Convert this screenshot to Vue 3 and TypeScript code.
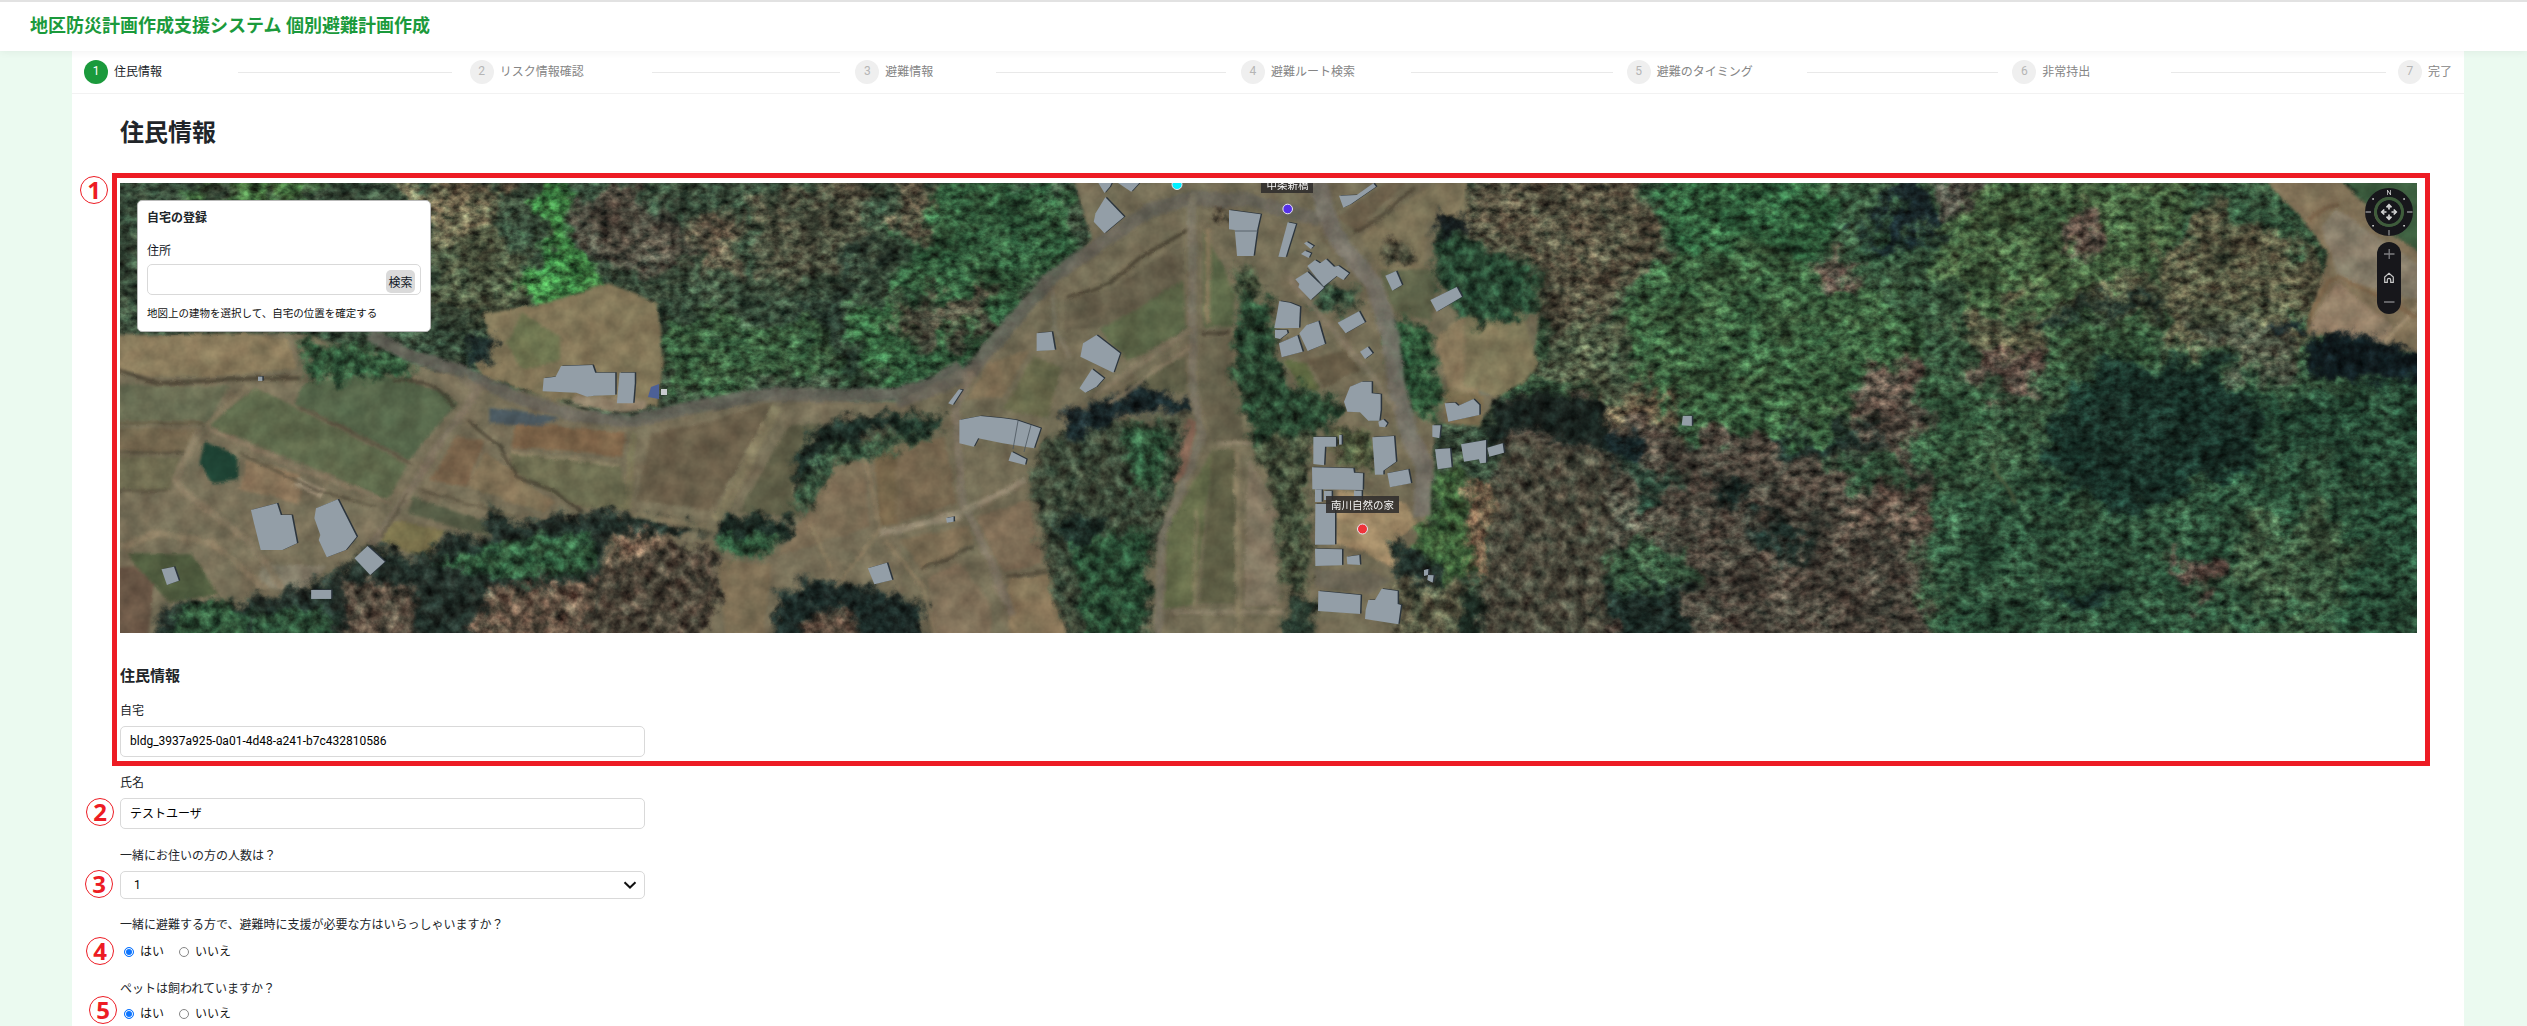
<script setup lang="ts">
import { ref } from 'vue'

interface Step { label: string; lead: number; trail: number }
interface Shape { c: string; p: string }
interface Road { c: string; w: number; p: string }
interface Tile {
  t: string
  forest: Shape[]
  fields: Shape[]
  trees: Shape[]
  roads: Road[]
  buildings: string[]
}

const steps: Step[] = [
  { label: '住民情報', lead: 76, trail: 18 },
  { label: 'リスク情報確認', lead: 68, trail: 15 },
  { label: '避難情報', lead: 63, trail: 15 },
  { label: '避難ルート検索', lead: 56, trail: 14 },
  { label: '避難のタイミング', lead: 54, trail: 14 },
  { label: '非常持出', lead: 81, trail: 12 },
  { label: '完了', lead: 0, trail: 0 },
]

const address = ref('')
const home = ref('bldg_3937a925-0a01-4d48-a241-b7c432810586')
const userName = ref('テストユーザ')
const support = ref('yes')
const pet = ref('yes')

const marks = [
  { n: 1, x: 94, y: 190 },
  { n: 2, x: 100, y: 812 },
  { n: 3, x: 99, y: 884 },
  { n: 4, x: 100, y: 951 },
  { n: 5, x: 103, y: 1010 },
]

const s = (c: string, p: string): Shape => ({ c, p })
const r = (c: string, w: number, p: string): Road => ({ c, w, p })

// Map tiles, west to east; each one has its own local coordinate grid.
const tiles: Tile[] = [
  {
    t: 'translate(110 170) scale(.5421 .3333)',
    forest: [
      s('#3f7038', '130,30 400,30 330,100 160,100'),
      s('#6e6a4c', '500,30 720,30 700,250 600,320 590,90'),
      s('#4c5a3f', '600,200 760,200 780,400 640,470 590,420'),
      s('#35853a', '770,30 850,30 840,200 900,330 920,400 860,450 780,390 760,340 810,260'),
      s('#4d4c3e', '850,60 1000,60 1100,200 1050,320 930,300 860,200'),
      s('#355e39', '1020,430 1150,460 1340,450 1360,600 1050,690 1020,600'),
      s('#5b5742', '1060,120 1170,120 1170,300 1110,320'),
      s('#4f543f', '1200,60 1420,80 1400,300 1200,350'),
      s('#2f6238', '1370,430 1568,330 1568,600 1380,650'),
      s('#263a2d', '1370,220 1420,200 1370,380 1345,600 1310,480 1240,420 1330,390'),
    ],
    fields: [
      s('#776f58', '-60,495 350,490 600,600 800,680 960,760 1230,680 1480,700 1580,640 1580,1460 -60,1460'),
      s('#827658', '690,430 800,400 920,340 1010,400 1020,580 1010,710 820,690 690,620 670,580 700,500'),
      s('#6f7550', '760,430 830,500 830,570 760,600 730,520'),
      s('#8a7b5c', '-60,500 250,490 330,510 345,600 180,620 80,620 -60,590'),
      s('#56664a', '360,640 500,610 600,660 640,700 550,870 340,700'),
      s('#5f6a4c', '270,650 340,710 550,885 510,990 400,910 180,765'),
      s('#696d53', '-60,640 220,650 180,755 -60,755'),
      s('#75684f', '-60,770 165,780 140,845 -60,845'),
      s('#6e6b50', '-60,860 130,860 110,960 -60,960'),
      s('#8a755a', '250,870 350,910 350,1000 300,980 240,960'),
      s('#1f4334', '175,815 235,860 235,930 190,940 165,880'),
      s('#7c6348', '750,755 950,790 945,860 740,830'),
      s('#6b6b4f', '740,845 940,885 960,1020 870,1015 740,900'),
      s('#6a5f4a', '1000,790 1100,760 1230,690 1110,1020 970,990'),
      s('#5f5e47', '1250,770 1310,760 1260,960 1270,1040 1160,1030'),
      s('#7a644b', '640,800 690,810 660,950 590,930'),
      s('#837357', '690,850 740,900 820,1000 800,1030 660,950'),
      s('#545a44', '560,980 700,1060 700,1100 550,1030'),
      s('#7a724c', '520,1050 620,1080 580,1170 500,1110'),
      s('#7d6e56', '1340,870 1390,880 1400,1070 1230,1160 1280,1040'),
      s('#76654a', '1410,840 1530,800 1560,860 1568,1030 1420,1070'),
      s('#4c5960', '700,710 830,745 800,765 700,760'),
      s('#7d6f55', '1120,1170 1220,1180 1200,1460 1140,1460'),
      s('#6a5746', '-60,1200 90,1180 60,1460 -60,1460'),
      s('#87806c', '280,1180 400,1190 350,1270 270,1250'),
      s('#a3957c', '345,920 400,960 390,985 340,950'),
      s('#93846c', '860,675 990,690 990,720 940,728 850,700'),
      s('#4f5b3e', '30,1150 150,1150 200,1270 110,1300'),
    ],
    trees: [
      s('#22302a', '90,1310 300,1280 420,1210 480,1120 580,1170 620,1080 700,1110 695,980 740,1060 900,1020 1010,1040 1110,1090 920,1100 880,1460 80,1460'),
      s('#2f5a3a', '120,1330 200,1290 260,1330 250,1460 100,1460'),
      s('#2f5e3c', '590,1180 700,1130 880,1080 900,1200 760,1230'),
      s('#2c5438', '270,1330 400,1300 420,1460 270,1460'),
      s('#574d3f', '430,1230 560,1250 560,1460 430,1460'),
      s('#665544', '700,1250 900,1230 860,1460 650,1460'),
      s('#4c4538', '930,1120 1110,1130 1130,1260 1070,1460 860,1460'),
      s('#7c6650', '930,1100 1020,1090 1020,1130 920,1180'),
      s('#1c2d26', '1310,760 1450,730 1530,740 1520,770 1400,790 1300,900 1260,960 1270,850'),
      s('#34523a', '1330,830 1500,770 1520,790 1410,860 1340,880 1280,1040 1255,980'),
      s('#1c2d26', '1120,1030 1260,1040 1250,1110 1180,1120 1120,1100'),
      s('#2c5638', '1130,1090 1240,1100 1220,1150 1180,1165 1120,1160'),
      s('#1b2a27', '1230,1280 1300,1220 1420,1260 1500,1300 1500,1460 1230,1460'),
      s('#305a39', '350,500 560,560 560,610 360,640'),
      s('#1c2c2a', '660,500 710,500 705,580 655,575'),
      s('#5a4d3e', '1290,1330 1370,1310 1380,1460 1270,1460'),
    ],
    roads: [
      r('#68655c', 13, '480,495 560,560 640,600 760,690 860,735 960,755 1080,710 1200,675 1440,675 1520,640 1570,590'),
      r('#7b705e', 8, '650,620 680,660 600,840 560,950 480,1130'),
      r('#857760', 4, '175,770 340,890 520,1000'),
      r('#857a60', 5, '175,770 260,640'),
      r('#877a62', 7, '165,780 120,930 150,980 260,1120 320,1260'),
      r('#8a7c62', 7, '18,1130 90,1090 190,1120 290,1260'),
      r('#7d7758', 7, '955,1010 965,790'),
      r('#857c5f', 11, '1230,710 1120,1050'),
      r('#857b60', 6, '960,1030 1120,1080'),
      r('#8a7b60', 4, '1395,870 1420,1080 1340,1250'),
      r('#8a7b60', 4, '1430,1110 1500,1250 1530,1460'),
      r('#9a8e78', 6, '1420,1090 1570,1040'),
      r('#8a7c60', 4, '1290,1050 1330,1200'),
      r('#453e30', 4, '-10,590 90,640 270,625 350,625'),
      r('#453e30', 3, '520,630 590,640 635,710'),
      r('#453e30', 3, '660,750 720,830 750,920 820,960 870,1030'),
      r('#57503e', 3, '350,710 555,880'),
      r('#5b553f', 3, '-10,760 170,760'),
      r('#534c3b', 2.5, '-10,850 140,845'),
      r('#534c3b', 2.5, '-10,965 110,960'),
      r('#534c3b', 2.5, '240,850 380,960 490,1010'),
      r('#534c3b', 2, '570,960 750,1040'),
      r('#534c3b', 2, '500,1100 550,970'),
      r('#8f8468', 3, '740,845 940,885'),
    ],
    buildings: [
      '832,588 890,585 895,608 932,608 932,675 893,677 880,680 860,668 798,664 800,625 822,620',
      '940,608 968,608 968,640 965,700 935,700',
      '260,1020 308,1000 315,1035 335,1035 345,1120 318,1140 278,1140 265,1055',
      '380,1015 420,988 455,1100 435,1140 400,1162 385,1110 388,1095 377,1045',
      '475,1128 507,1175 480,1215 451,1165',
      '371,1260 408,1260 408,1287 371,1287',
      '95,1198 118,1190 127,1232 105,1245',
      '1398,1195 1433,1178 1443,1230 1410,1243',
      '273,620 281,620 281,633 273,633',
    ],
  },
  {
    t: 'translate(900 170) scale(.4464 .3333)',
    forest: [
      s('#2d5c37', '60,0 370,0 395,200 330,340 250,430 200,520 0,660 0,200'),
      s('#59543f', '0,0 60,0 90,200 0,180'),
      s('#4a4b3a', '0,380 200,400 230,470 60,520 0,500'),
      s('#4c5040', '1280,0 1568,0 1568,650 1430,600 1440,300 1280,150'),
    ],
    fields: [
      s('#736c55', '380,0 1290,0 1200,200 1210,350 1430,430 1420,600 1340,680 1300,760 1200,760 1180,1180 1130,1460 0,1460 0,800 100,790 0,690 200,560 350,330 430,200'),
      s('#665f4b', '370,390 480,350 635,210 635,330 470,470 370,485'),
      s('#5a6446', '635,330 640,480 510,575 450,480'),
      s('#5f5e47', '500,650 640,560 640,670 560,660'),
      s('#65604b', '675,500 740,505 775,810 700,815 670,650'),
      s('#5c6848', '680,180 750,360 745,470 680,470'),
      s('#76674f', '-10,820 100,800 125,1000 -10,1060'),
      s('#67684a', '300,560 360,590 330,745 230,720'),
      s('#7c6d53', '200,580 290,540 230,680 150,690'),
      s('#7d6c55', '170,1040 290,990 320,1180 230,1210'),
      s('#7a6b52', '0,1110 150,1070 165,1120 50,1200'),
      s('#7e6f58', '60,1230 130,1175 200,1290 210,1460 80,1460'),
      s('#847357', '240,1230 345,1210 390,1460 250,1460'),
      s('#656c4a', '600,1070 700,840 660,1300 590,1320'),
      s('#5e5e45', '700,840 750,840 750,1300 670,1300'),
      s('#827762', '780,860 840,1000 850,1310 770,1310'),
      s('#6b5f4a', '980,140 1130,0 1160,0 1020,185'),
      s('#7b7257', '1030,200 1180,50 1270,0 1270,150 1180,150 1180,300 1080,300'),
      s('#5f644a', '1070,300 1200,300 1190,450 1110,430'),
      s('#8c7b5d', '1200,500 1260,440 1300,680 1230,690'),
      s('#7c7355', '1310,400 1390,430 1430,580 1340,680 1320,600'),
      s('#6f7565', '1270,470 1310,470 1325,680 1300,670'),
      s('#a08a67', '980,960 1130,1000 1160,1060 1110,1110 1110,1200 1040,1150 975,1120'),
      s('#6b6555', '930,1200 1060,1210 1100,1230 1060,1270 930,1250'),
      s('#665b46', '910,570 1000,540 1030,600 950,650'),
      s('#5c6640', '860,570 910,580 940,660 900,660'),
      s('#846554', '640,740 665,760 650,900 600,960 620,850'),
      s('#7c6e50', '1220,650 1310,680 1300,770 1220,760'),
    ],
    trees: [
      s('#3c4a38', '380,770 640,740 610,1000 560,1200 570,1460 390,1460 330,1200 290,950 320,820'),
      s('#2c5437', '500,760 600,780 590,980 520,960'),
      s('#18272a', '360,740 540,650 640,690 640,730 500,730 380,830'),
      s('#264b31', '380,1100 560,1080 540,1460 420,1460'),
      s('#1c2f28', '350,1040 470,1040 420,1140 360,1110'),
      s('#27472f', '760,370 830,390 840,540 880,640 990,700 960,780 790,820 745,600'),
      s('#424e38', '790,820 920,780 920,1250 860,1280 830,950'),
      s('#4a5538', '960,780 1060,780 1060,900 980,880'),
      s('#2a5434', '1070,430 1180,470 1220,680 1190,760 1130,700'),
      s('#264a32', '1200,180 1430,290 1430,420 1290,480 1200,340'),
      s('#161f20', '1205,140 1250,130 1290,190 1250,190 1200,210'),
      s('#3b6035', '1200,900 1260,900 1280,1200 1180,1290 1130,1150 1190,1040'),
      s('#4b4a3c', '1350,800 1580,850 1580,1460 1260,1460 1330,1150'),
      s('#18231f', '1330,700 1440,660 1580,700 1580,850 1400,770 1310,860'),
      s('#20302a', '1110,1090 1200,1180 1240,1290 1180,1300 1110,1220'),
      s('#555640', '1100,1240 1260,1240 1250,1460 1120,1460'),
      s('#84694e', '1270,930 1335,940 1310,1240 1280,1220'),
      s('#26382c', '870,1280 930,1280 920,1460 850,1460'),
      s('#18271f', '1260,1270 1310,1290 1290,1460 1250,1460'),
      s('#1d3226', '-10,735 100,740 100,780 -10,800'),
      s('#1b2a27', '-10,1270 50,1330 60,1460 -10,1460'),
      s('#34503a', '930,340 1040,360 1000,430 930,410'),
      s('#405038', '750,290 800,290 800,370 760,380'),
      s('#5a4f3c', '680,110 735,90 735,160 700,150'),
      s('#4b4a38', '1080,220 1140,220 1150,280 1080,280'),
    ],
    roads: [
      r('#67645a', 14, '-10,695 90,650 160,600 250,460 340,320 560,120 650,85 780,90 940,150'),
      r('#77736a', 18, '925,0 970,190 1060,340 1100,500 1110,640 1140,790 1172,880 1170,1040'),
      r('#787263', 8, '655,70 655,640 675,800 630,960 585,1100 578,1460'),
      r('#7c7262', 8, '160,600 125,720 140,1000 200,1160 250,1340'),
      r('#827763', 6, '870,320 950,450 1060,620 1110,720'),
      r('#857962', 5, '650,480 430,680'),
      r('#857962', 4, '650,530 470,700'),
      r('#958a74', 6, '-10,1085 150,1020 280,930'),
      r('#8b806a', 5, '600,1325 860,1325'),
      r('#8b806a', 4, '710,820 790,820'),
      r('#857b60', 5, '755,850 760,1460'),
      r('#857b60', 3, '665,1020 660,1310'),
      r('#85755a', 6, '690,180 690,460'),
      r('#3d3629', 3, '375,385 470,340 540,260 645,180'),
      r('#463e30', 3, '1015,185 1080,140 1150,50'),
      r('#463e30', 4, '675,490 740,490'),
      r('#463e30', 3, '50,1200 165,1130'),
      r('#463e30', 3, '235,1222 330,1205'),
      r('#7b7663', 5, '340,360 345,470 380,560'),
    ],
    buildings: [
      '438,130 460,82 502,140 458,190 434,155',
      '443,36 475,36 470,50 458,69',
      '485,36 538,36 518,65',
      '737,120 808,133 800,180 792,258 755,258 750,180 737,178',
      '306,490 340,485 347,540 306,543',
      '410,520 440,495 493,550 478,608 404,560',
      '430,597 457,625 440,650 415,668 402,655',
      '108,700 132,658 140,660 118,705',
      '133,750 180,738 232,745 260,750 315,775 300,835 230,820 175,805 165,830 133,820',
      '250,845 283,868 280,885 243,872',
      '103,1044 120,1040 120,1055 105,1058',
    ],
  },
  {
    t: 'translate(1500 170) scale(.5995 .3333)',
    forest: [
      s('#34583a', '0,-40 1620,-40 1620,1480 0,1480'),
      s('#56543f', '-60,-40 200,-40 260,130 270,250 190,400 130,500 80,620 60,480 -60,350'),
      s('#2b5f37', '250,-40 560,-40 560,200 520,260 290,240'),
      s('#366039', '280,230 520,260 680,420 700,560 560,800 340,780 240,640 180,480'),
      s('#4b5a40', '80,480 190,420 230,640 300,760 140,700 60,620'),
      s('#665b42', '140,680 260,660 300,760 230,780'),
      s('#16272a', '600,200 680,70 740,130 830,190 720,200'),
      s('#4f4e42', '740,0 820,0 820,190 740,140'),
      s('#3f6039', '850,-40 1160,-40 1120,250 960,400 780,400 700,260'),
      s('#5b4f42', '910,130 1000,110 1020,220 940,260'),
      s('#5d5044', '530,260 600,280 610,360 560,340'),
      s('#55593f', '780,400 960,400 1120,250 1180,100 1330,200 1370,350 1330,560 1120,560 1100,440 940,470 900,580 780,580'),
      s('#355a38', '930,450 1100,420 1090,560 1000,580 930,600'),
      s('#1e3027', '900,440 1080,350 1110,390 990,430 900,500'),
      s('#584c40', '780,560 910,560 910,680 830,680'),
      s('#4f5945', '1120,430 1290,400 1330,620 1230,600'),
      s('#173429', '1010,550 1250,620 1260,900 1060,1060 900,950 920,760'),
      s('#1f432e', '1250,640 1380,680 1430,900 1260,900'),
      s('#2a5237', '1250,880 1430,880 1430,1040 1390,1310 1000,1480 740,1480 720,1000 880,900 1060,1050'),
      s('#3a5a3c', '1230,1050 1420,1040 1390,1300 1230,1300'),
      s('#234a32', '1370,640 1620,600 1620,1480 1390,1480 1440,1000'),
      s('#2f5637', '700,600 840,680 820,900 710,900'),
      s('#4b473b', '0,690 480,820 700,800 720,1480 -10,1480'),
      s('#16282a', '140,790 240,790 240,860 150,870'),
      s('#2c4a38', '120,860 240,860 300,960 240,980'),
      s('#555747', '0,870 180,870 300,1100 80,1150 -10,1080'),
      s('#355a3c', '80,1150 300,1120 310,1260 100,1240'),
      s('#2f5538', '550,850 680,880 660,980 560,920'),
      s('#13231f', '340,930 430,960 430,1010 370,1010'),
      s('#1b2d27', '420,1040 500,1060 510,1200 450,1130'),
      s('#1b2d27', '480,800 640,790 640,850 480,840'),
      s('#5d5446', '590,600 680,580 710,780 640,830 570,760'),
      s('#1d3029', '130,1240 300,1260 330,1480 220,1480'),
      s('#5b5042', '620,960 710,920 720,1100 600,1080'),
      s('#5a4b40', '1120,1150 1200,1170 1220,1240 1160,1290 1130,1240'),
      s('#16302a', '930,1250 1030,1250 1000,1310 930,1300'),
    ],
    fields: [
      s('#807157', '1250,-20 1370,-20 1620,400 1620,600 1460,520 1345,490 1380,250 1340,150'),
      s('#857b68', '1395,115 1535,290 1535,390 1400,330 1370,170'),
      s('#948068', '1395,335 1490,470 1470,525 1370,480 1350,470'),
      s('#3d5f40', '1390,-20 1620,-20 1620,360 1480,180'),
      s('#807859', '-60,330 10,390 40,430 60,590 40,640 -10,680 -60,640'),
    ],
    trees: [
      s('#0f1c20', '1340,560 1370,480 1460,500 1540,560 1620,600 1620,650 1360,620'),
      s('#16262a', '1290,470 1330,450 1350,490 1300,490'),
    ],
    roads: [
      r('#9a896e', 5, '1540,390 1475,520'),
      r('#7b6348', 4, '1345,470 1380,330 1400,320 1530,440'),
      r('#705a43', 5, '1350,150 1380,110 1400,100'),
      r('#1b2b22', 3, '850,960 880,1080 930,1180'),
      r('#4f5c40', 4, '820,880 860,1000'),
      r('#14281f', 2, '1380,700 1430,860 1440,1000 1400,1160 1390,1300'),
    ],
    buildings: ['305,738 320,738 320,768 303,766'],
  },
  {
    t: 'translate(1240 170) scale(.3333)',
    forest: [], fields: [], trees: [], roads: [],
    buildings: [
      '143,157 168,162 137,262 115,260',
      '297,77 350,75 400,40 408,50 332,103 310,113',
      '192,220 200,215 221,228 212,237',
      '183,252 195,242 213,250 206,264',
      '202,288 225,270 240,280 258,267 282,290 295,287 327,310 310,330 290,318 250,350',
      '166,328 202,305 252,353 212,390 175,352 178,342',
      '118,393 150,398 180,410 177,474 103,474',
      '105,480 140,480 143,490 120,507 105,503',
      '117,520 172,496 188,545 125,562',
      '178,490 200,465 235,453 255,522 203,543',
      '293,458 357,424 375,457 317,490',
      '436,317 468,303 486,345 457,362',
      '571,390 650,351 666,380 590,425',
      '360,545 383,530 398,550 375,567',
    ],
  },
  {
    t: 'translate(1240 380) scale(.3333)',
    forest: [], fields: [], trees: [], roads: [],
    buildings: [
      '312,65 330,20 365,5 395,5 395,40 422,43 422,90 418,122 385,122 360,97 322,95',
      '415,125 430,118 442,130 435,142 418,140',
      '220,171 288,171 288,200 255,200 252,256 220,252',
      '297,165 305,165 305,194 297,194',
      '397,172 462,168 468,245 430,272 430,284 405,284',
      '442,280 505,268 513,310 450,322',
      '585,208 630,205 635,262 593,268',
      '577,136 602,136 598,175 577,170',
      '614,70 645,68 655,77 700,57 718,75 718,105 625,125',
      '663,193 738,180 738,248 720,250 717,238 672,245',
      '742,203 788,190 792,218 748,230',
      '216,262 340,265 342,278 369,280 368,330 217,328',
      '225,328 245,328 245,366 225,366',
      '252,333 275,333 275,360 252,360',
      '342,332 365,332 365,360 342,360',
      '226,372 285,372 285,494 225,494',
      '225,506 306,508 306,556 226,558',
      '320,530 358,525 360,555 322,553',
      '235,633 362,645 360,702 234,693',
      '377,690 385,660 405,660 425,626 473,633 473,672 483,675 475,733 375,717',
      '552,570 565,567 564,585 552,588',
      '564,585 581,586 578,608 562,600',
    ],
  },
]
</script>

<template>
  <div class="page">
    <header class="topbar"><h1>地区防災計画作成支援システム 個別避難計画作成</h1></header>

    <main class="sheet">
      <nav class="stepper">
        <div v-for="(st, i) in steps" :key="st.label" class="step" :class="{ active: i === 0, last: i === 6 }">
          <span class="num">{{ i + 1 }}</span>
          <span class="label">{{ st.label }}</span>
          <i v-if="i < 6" class="line" :style="{ marginLeft: st.lead + 'px', marginRight: st.trail + 'px' }"></i>
        </div>
      </nav>

      <div class="body">
        <h2>住民情報</h2>

        <section class="map">
          <svg class="ground" viewBox="120 183 2297 450" width="2297" height="450">
            <defs>
              <filter id="canopy" filterUnits="userSpaceOnUse" x="60" y="130" width="2420" height="560" color-interpolation-filters="sRGB">
                <feGaussianBlur in="SourceGraphic" stdDeviation="5" result="soft" />
                <feTurbulence type="fractalNoise" baseFrequency=".03" numOctaves="4" seed="4" result="warp" />
                <feDisplacementMap in="soft" in2="warp" scale="70" xChannelSelector="R" yChannelSelector="G" />
                <feColorMatrix type="matrix" values="2 0 0 0 0  0 2 0 0 0  0 0 2 0 0  0 0 0 1 0" result="moved" />
                <feTurbulence type="fractalNoise" baseFrequency=".1 .13" numOctaves="4" seed="11" result="n" />
                <feColorMatrix in="n" type="matrix" values=".9 0 .15 0 -.04  .9 0 0 0 .03  .9 0 0 0 .03  0 0 0 0 1" result="g" />
                <feComposite in="moved" in2="g" operator="arithmetic" k1="1" k2="0" k3="0" k4="0" />
                <feColorMatrix type="matrix" values="1.43 0 0 0 0  0 1.43 0 0 0  0 0 1.43 0 0  0 0 0 1 0" result="fine" />
                <feColorMatrix in="warp" type="matrix" values="1.2 .3 0 0 -.25  1.2 0 0 0 -.12  1.2 0 0 0 -.1  0 0 0 0 1" result="w" />
                <feComposite in="fine" in2="w" operator="arithmetic" k1=".6" k2=".4" k3="0" k4="0" />
                <feColorMatrix type="saturate" values=".88" />
              </filter>
              <filter id="clump" filterUnits="userSpaceOnUse" x="60" y="130" width="2420" height="560" color-interpolation-filters="sRGB">
                <feGaussianBlur in="SourceGraphic" stdDeviation="3" result="soft" />
                <feTurbulence type="fractalNoise" baseFrequency=".06" numOctaves="4" seed="8" result="warp" />
                <feDisplacementMap in="soft" in2="warp" scale="26" xChannelSelector="R" yChannelSelector="G" />
                <feColorMatrix type="matrix" values="2 0 0 0 0  0 2 0 0 0  0 0 2 0 0  0 0 0 1 0" result="moved" />
                <feTurbulence type="fractalNoise" baseFrequency=".09" numOctaves="4" seed="21" result="n" />
                <feColorMatrix in="n" type="matrix" values=".9 0 .15 0 -.04  .9 0 0 0 .03  .9 0 0 0 .03  0 0 0 0 1" result="g" />
                <feComposite in="moved" in2="g" operator="arithmetic" k1="1" k2="0" k3="0" k4="0" />
                <feColorMatrix type="matrix" values="1.43 0 0 0 0  0 1.43 0 0 0  0 0 1.43 0 0  0 0 0 1 0" result="fine" />
                <feColorMatrix in="warp" type="matrix" values="1 .2 0 0 -.1  1 0 0 0 0  1 0 0 0 0  0 0 0 0 1" result="w" />
                <feComposite in="fine" in2="w" operator="arithmetic" k1=".6" k2=".4" k3="0" k4="0" />
                <feColorMatrix type="saturate" values=".9" />
              </filter>
              <filter id="soil" filterUnits="userSpaceOnUse" x="60" y="130" width="2420" height="560" color-interpolation-filters="sRGB">
                <feGaussianBlur in="SourceGraphic" stdDeviation="1.400" result="soft" />
                <feTurbulence type="fractalNoise" baseFrequency=".05" numOctaves="4" seed="2" result="n" />
                <feDisplacementMap in="soft" in2="n" scale="5" xChannelSelector="R" yChannelSelector="G" />
                <feColorMatrix type="matrix" values="1.43 0 0 0 0  0 1.43 0 0 0  0 0 1.43 0 0  0 0 0 1 0" result="moved" />
                <feColorMatrix in="n" type="matrix" values=".5 0 .1 0 .2  .52 0 0 0 .24  .52 0 0 0 .24  0 0 0 0 1" result="g" />
                <feComposite in="moved" in2="g" operator="arithmetic" k1=".6" k2=".4" k3="0" k4="0" />
              </filter>
            </defs>
            <g filter="url(#canopy)">
              <rect x="0" y="80" width="2540" height="660" fill="#38503a" />
              <g v-for="(tile, i) in tiles" :key="i" :transform="tile.t">
                <polygon v-for="(q, k) in tile.forest" :key="k" :points="q.p" :fill="q.c" />
              </g>
            </g>
            <g filter="url(#soil)">
              <g v-for="(tile, i) in tiles" :key="i" :transform="tile.t">
                <polygon v-for="(q, k) in tile.fields" :key="k" :points="q.p" :fill="q.c" />
              </g>
            </g>
            <g filter="url(#clump)">
              <g v-for="(tile, i) in tiles" :key="i" :transform="tile.t">
                <polygon v-for="(q, k) in tile.trees" :key="k" :points="q.p" :fill="q.c" />
              </g>
            </g>
            <g filter="url(#soil)" opacity=".85">
              <g v-for="(tile, i) in tiles" :key="i" :transform="tile.t">
                <polyline v-for="(q, k) in tile.roads" :key="k" class="road" :points="q.p" :stroke="q.c" :stroke-width="q.w" />
              </g>
            </g>
            <polygon points="651,387 659,384 659,399 648,397" fill="#4c6097" />
            <rect x="661" y="389" width="6" height="6" fill="#c9ccd0" />
            <g transform="translate(1.5 -.5)" fill="#2c353d">
              <g v-for="(tile, i) in tiles" :key="i" :transform="tile.t">
                <polygon v-for="(q, k) in tile.buildings" :key="k" :points="q" />
              </g>
            </g>
            <g fill="#939ea7">
              <g v-for="(tile, i) in tiles" :key="i" :transform="tile.t">
                <polygon v-for="(q, k) in tile.buildings" :key="k" :points="q" />
              </g>
            </g>
            <path d="M1235 231h23M1013 449l5-28M1024 452l7-27M1307 268l17 19" stroke="#4a545c" fill="none" stroke-width=".8" />
            <g stroke="#e8e8f4" stroke-width="1">
              <circle cx="1177" cy="184.500" r="5" fill="#00f0ff" />
              <circle cx="1287.700" cy="209" r="4.800" fill="#5530e8" />
              <circle cx="1362.500" cy="529" r="5" fill="#ee343a" />
            </g>
            <rect x="1261" y="176" width="52" height="17" fill="#302e2c" fill-opacity=".88" />
            <rect x="1326" y="496" width="73" height="17" fill="#302e2c" fill-opacity=".88" />
            <text class="place" x="1266.500" y="189">中条新橋</text>
            <text class="place" x="1331" y="508.500">南川自然の家</text>

            <circle cx="2389" cy="212" r="19.500" fill="none" stroke="#17171b" stroke-width="9" />
            <circle cx="2389" cy="212" r="12" fill="#17171b" />
            <circle cx="2389" cy="212" r="13.500" fill="none" stroke="#3f5c3b" stroke-width="2.600" />
            <text class="north" x="2389" y="194.500">N</text>
            <path d="M2365.500 212h5.500M2407 212h5.500M2389 230v5.500" stroke="#8b8b8e" stroke-width="1.300" />
            <path d="M2372.300 199h1.600M2403.300 199h1.600M2372.300 225.700h1.600M2403.300 225.700h1.600" stroke="#ddd" stroke-width="1.500" />
            <g stroke="#d6d6d6" stroke-width="1.700" fill="none" stroke-linejoin="miter">
              <path d="M2389 205v4.500M2389 214.500v4.500M2382 212h4.500M2391.500 212h4.500" />
              <path d="M2386.500 207.300l2.500-2.500 2.500 2.500M2386.500 216.700l2.500 2.500 2.500-2.500M2384.300 209.500l-2.500 2.500 2.500 2.500M2393.700 209.500l2.500 2.500-2.500 2.500" />
            </g>
            <rect x="2377" y="242" width="24" height="72" rx="12" fill="#17171b" />
            <path d="M2384 254h10.500M2389.200 249v10" stroke="#7d7d80" stroke-width="1.300" />
            <path d="M2384 302h10.500" stroke="#7d7d80" stroke-width="1.500" />
            <path d="M2384.700 282.300v-5.300l4.300-3.600 4.300 3.600v5.300h-2.600v-2.300a1.700 1.700 0 0 0-3.400 0v2.300z" fill="none" stroke="#c8c8c8" stroke-width="1.200" />
          </svg>

          <div class="card">
            <h3>自宅の登録</h3>
            <label>住所</label>
            <div class="search"><input v-model="address" type="text" /><button type="button">検索</button></div>
            <p>地図上の建物を選択して、自宅の位置を確定する</p>
          </div>
        </section>

        <form class="form">
          <h3>住民情報</h3>
          <label class="l1">自宅</label>
          <input v-model="home" class="field" type="text" />
          <label class="l2">氏名</label>
          <input v-model="userName" class="field name" type="text" />
          <label class="l3">一緒にお住いの方の人数は？</label>
          <div class="field select">
            <span>1</span>
            <svg width="14" height="8" viewBox="0 0 14 8"><path d="M1.500 1.200L7 6.500l5.500-5.300" fill="none" stroke="#111" stroke-width="2" /></svg>
          </div>
          <label class="l4">一緒に避難する方で、避難時に支援が必要な方はいらっしゃいますか？</label>
          <div class="radios">
            <span class="opt" @click="support = 'yes'"><i class="dot" :class="{ on: support === 'yes' }"></i>はい</span>
            <span class="opt" @click="support = 'no'"><i class="dot" :class="{ on: support === 'no' }"></i>いいえ</span>
          </div>
          <label class="l5">ペットは飼われていますか？</label>
          <div class="radios">
            <span class="opt" @click="pet = 'yes'"><i class="dot" :class="{ on: pet === 'yes' }"></i>はい</span>
            <span class="opt" @click="pet = 'no'"><i class="dot" :class="{ on: pet === 'no' }"></i>いいえ</span>
          </div>
        </form>
      </div>
    </main>

    <div class="frame"></div>
    <span v-for="m in marks" :key="m.n" class="mark" :style="{ left: m.x - 14 + 'px', top: m.y - 14 + 'px' }">{{ m.n }}</span>
  </div>
</template>

<style>
body { overflow: hidden; }
</style>

<style scoped>
* { box-sizing: border-box; }
.page {
  position: relative;
  width: 2527px;
  height: 1026px;
  overflow: hidden;
  background: #ebfaf0;
  color: #212529;
  font-family: Roboto, "Noto Sans CJK JP", sans-serif;
  font-size: 12px;
  line-height: 18px;
}
h1, h2, h3, p { margin: 0; }
.topbar {
  position: relative;
  z-index: 1;
  height: 51px;
  padding: 11px 30px 0;
  background: #fff;
  border-top: 2px solid #e2e2e2;
  box-shadow: 0 1px 8px rgba(0, 0, 0, .06);
}
.topbar h1 { font-size: 18px; line-height: 26px; color: #1b9a3c; font-weight: 700; }
.sheet { width: 2392px; height: 975px; margin-left: 72px; background: #fff; }
.stepper {
  display: flex;
  align-items: center;
  height: 43px;
  padding-left: 12px;
  border-bottom: 1px solid #f2f2f2;
}
.step { display: flex; align-items: center; flex: 0 0 385.670px; color: #858585; }
.step.last { flex: 0 0 auto; }
.step.active { color: #212529; }
.num {
  width: 24px;
  height: 24px;
  margin-right: 6px;
  border-radius: 50%;
  background: #efefef;
  color: #b5b5b5;
  line-height: 23px;
  text-align: center;
}
.active .num { background: #1b9a3c; color: #fff; }
.label { white-space: nowrap; }
.line { flex: 1; height: 1px; background: #e9e9e9; }
.body { padding-left: 48px; }
h2 { height: 89px; padding-top: 22px; font-size: 24px; line-height: 34px; font-weight: 700; }
.map { position: relative; width: 2297px; height: 450px; }
.ground { display: block; }
.road { fill: none; vector-effect: non-scaling-stroke; stroke-linejoin: round; }
.place { font: 10.5px "Noto Sans CJK JP", sans-serif; fill: #f4f4f4; }
.north { font: 7px Roboto, sans-serif; fill: #ddd; text-anchor: middle; }
.card {
  position: absolute;
  left: 17px;
  top: 17px;
  width: 294px;
  height: 132px;
  padding: 8px 9px;
  background: #fff;
  border: 1px solid #b9b9b9;
  border-radius: 5px;
}
.card h3 { font-size: 12px; line-height: 18px; font-weight: 700; }
.card label { display: block; margin-top: 15px; color: #111827; }
.search {
  display: flex;
  justify-content: space-between;
  align-items: flex-start;
  width: 274px;
  height: 31px;
  margin-top: 4px;
  padding: 5px 5px 0 8px;
  border: 1px solid #d9d9d9;
  border-radius: 5px;
}
.search input { width: 200px; border: 0; outline: 0; }
.search button {
  width: 29px;
  height: 23px;
  padding: 2px 0 0;
  border: 0;
  border-radius: 5px;
  background: #dadada;
  color: #111827;
  font: inherit;
  line-height: 20px;
}
.card p { margin-top: 10px; font-size: 10.5px; line-height: 18px; color: #111; white-space: nowrap; }
.form { display: flex; flex-direction: column; padding-top: 33px; }
.form h3 { font-size: 15px; line-height: 20px; font-weight: 700; }
.form label { line-height: 18px; white-space: nowrap; }
.l1 { margin: 16px 0 6px; }
.l2 { margin: 17px 0 6px; }
.l3 { margin: 18px 0 6px; }
.l4 { margin: 17px 0 9px; }
.l5 { margin: 19px 0 7px; }
.field {
  width: 525px;
  height: 31px;
  padding: 0 9px 1px;
  border: 1px solid #d9d9d9;
  border-radius: 5px;
  background: #fff;
  color: #000;
  font: inherit;
  outline: 0;
}
.name { padding-bottom: 3px; }
.select { display: flex; align-items: center; justify-content: space-between; height: 28px; padding: 0 7px 0 13px; }
.radios { display: flex; gap: 15px; height: 18px; padding-left: 4px; color: #111; }
.opt { display: flex; align-items: center; gap: 6px; }
.dot { width: 10px; height: 10px; border: 1px solid #858585; border-radius: 50%; background: #fff; }
.dot.on { border-color: #0d75ff; background: #0d75ff; box-shadow: inset 0 0 0 1px #fff; }
.frame {
  position: absolute;
  z-index: 2;
  left: 112px;
  top: 173px;
  width: 2318px;
  height: 593px;
  border: 5px solid #ed1c24;
  pointer-events: none;
}
.mark {
  position: absolute;
  z-index: 2;
  width: 28px;
  height: 28px;
  border: 1.5px solid #ed1c24;
  border-radius: 50%;
  color: #ed1c24;
  font: 700 24px/26px "Noto Sans", sans-serif;
  text-align: center;
}
</style>
